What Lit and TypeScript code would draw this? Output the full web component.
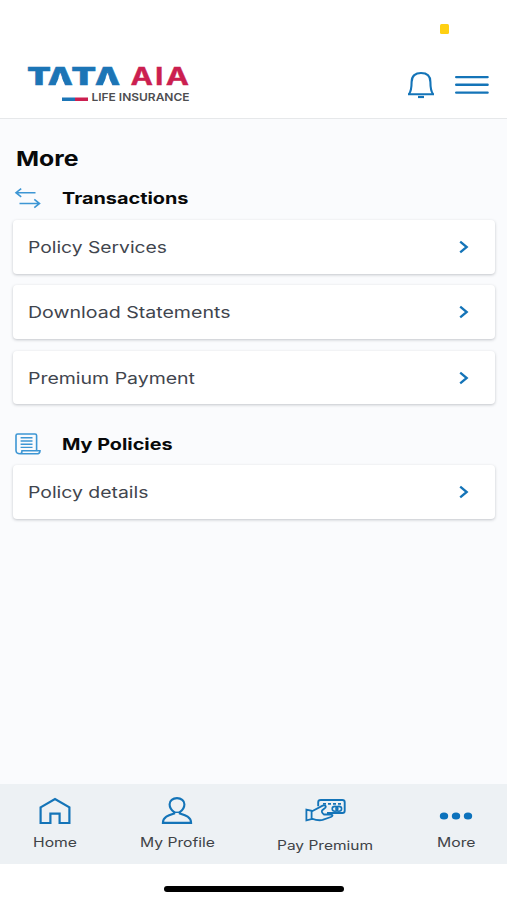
import { LitElement, html, svg, css } from "lit";
import { customElement } from "lit/decorators.js";

// Text set to an exact advance width, for the app's wide lettering.
const label = (text: string, width: number, cls: string, height = 20, base = 15) => html`
  <svg class="label ${cls}" width=${width} height=${height} aria-label=${text}>
    <text x="0" y=${base} textLength=${width} lengthAdjust="spacingAndGlyphs">${text}</text>
  </svg>`;

// One wordmark letter, stretched to the given width.
const letter = (ch: string, x: number, width: number, cls: string) => svg`
  <text class=${cls} x=${x} y="22" textLength=${width} lengthAdjust="spacingAndGlyphs">${ch}</text>`;

const icon = (w: number, h: number, body: unknown, cls = "icon") => html`
  <svg class=${cls} width=${w} height=${h} viewBox="0 0 ${w} ${h}">${body}</svg>`;

const bell = icon(28, 28, svg`
  <path d="M1 23.2H27M2 23C4.2 20 4.6 17.8 4.6 10.9C4.6 4.8 8.6 2 14 2S23.4 4.8 23.4 10.9C23.4 17.8 23.8 20 26 23" stroke-width="2.1"/>
  <path d="M11 26H17" stroke-width="2.2"/>`);
const burger = icon(34, 22, svg`<path d="M1.2 3.1H32.6M1.2 10.8H32.6M1.2 18.6H32.6" stroke-width="2.4" stroke-linecap="round"/>`);
const chevron = icon(12, 14, svg`<path d="M2.2 1.6L8.7 7L2.2 12.4" stroke-width="2.3"/>`);
const arrows = icon(26, 22, svg`
  <path d="M20.5 5.7H1M6.2 1.6L1 5.7L6.2 9.8M4.5 16.5H24.5M19.3 12.4L24.5 16.5L19.3 20.6" stroke-width="1.6"/>`, "icon soft");
const scroll = icon(26, 22, svg`
  <path d="M5 20.8C2.5 20.8 1 19.6 1 17.5V2.6Q1 1 2.7 1H20Q21.6 1 21.6 2.6V17M5 20.8C7 20.8 7 19.3 7 17.7H25C25 19.8 24 20.8 21.5 20.8H5" stroke-width="1.6"/>
  <path d="M5.6 4.8H17.5M5.6 8H17.5M5.6 11.2H17.5M5.6 14.4H17.5" stroke-width="1.4"/>`, "icon soft");
const home = icon(32, 28, svg`
  <path d="M1.6 10.4L16 2L30.4 10.4V26H20.6V16.6H11.4V26H1.6Z" stroke-width="2.2"/>`);
const person = icon(32, 28, svg`
  <path d="M16 1.1C11.8 1.1 8.6 3.7 8.6 7.2C8.6 10.5 10.4 13.2 13.2 15.1V16.4C8.3 18 1.9 19.7 1.9 25.9H30.1C30.1 19.7 23.7 18 18.8 16.4V15.1C21.6 13.2 23.4 10.5 23.4 7.2C23.4 3.7 20.2 1.1 16 1.1Z" stroke-width="2.1"/>
  <path d="M12.8 15.3H19.2" stroke-width="1.4"/>`);
const pay = icon(42, 26, svg`
  <path d="M13.2 8.2V4.2Q13.2 2 15.8 2H37.3Q39.7 2 39.7 4.2V12.7Q39.7 15 37.3 15H22" stroke-width="1.9"/>
  <path d="M1.4 11.6L6.6 12.8V21L1.4 22.3ZM6.6 13.5L17.6 7.7C20 6.9 21.6 8.2 20.4 9.6L17.3 12.2C16.1 13.5 17.3 15.3 19 16.5H26.5C28.3 17.1 27.4 18.5 25.9 19L17.6 21.9Q13.5 23 6.6 20.7" stroke-width="1.8"/>
  <path d="M18 5.8H21M23 5.8H26M28 5.8H31M33 5.8H36" stroke-width="1.7"/>
  <ellipse cx="30" cy="10.8" rx="2.8" ry="2.4" stroke-width="1.6"/><ellipse cx="33.8" cy="10.8" rx="2.8" ry="2.4" stroke-width="1.6"/>`);
const dots = icon(34, 10, svg`
  <g class="fill"><ellipse cx="5" cy="5" rx="4.2" ry="3.6"/><ellipse cx="17" cy="5" rx="4.2" ry="3.6"/><ellipse cx="29" cy="5" rx="4.2" ry="3.6"/></g>`);

const card = (text: string, width: number) => html`
  <div class="card">${label(text, width, "item", 20, 16)}${chevron}</div>`;
const tab = (glyph: unknown, text: string, width: number, cls: string) => html`
  <div class="tab ${cls}"><div class="glyph">${glyph}</div>${label(text, width, "tabtext", 18, 13.3)}</div>`;

@customElement("app-root")
export class AppRoot extends LitElement {
  static styles = css`
    :host { display: flex; flex-direction: column; width: 507px; height: 900px; background: #fff; overflow: hidden; font-family: Inter, "Liberation Sans", sans-serif; }
    svg { display: block; flex: none; overflow: visible; }
    .icon { fill: none; stroke: #1474b8; }
    .soft { stroke: #3d96d4; }
    .fill { fill: #0c72bc; stroke: none; }
    .status { height: 54px; box-sizing: border-box; padding: 24px 58px 0 0; display: flex; justify-content: flex-end; }
    .dot { width: 9px; height: 10px; border-radius: 1.5px; background: #ffd012; }
    .header { height: 65px; box-sizing: border-box; display: flex; align-items: flex-start; padding: 9px 18.5px 0 27px; border-bottom: 1.5px solid #e6e8ea; }
    .tools { display: flex; margin-left: auto; align-items: center; gap: 20px; padding-top: 8px; }
    .tata { font: 900 24.5px Inter, sans-serif; fill: #1c75b6; stroke: #1c75b6; stroke-width: .5px; }
    .aia { font: 700 24.5px Inter, sans-serif; fill: #cb1f50; stroke: #cb1f50; stroke-width: .3px; }
    .life { font: 600 10.5px Inter, sans-serif; fill: #4d4d50; }
    .main { flex: 1; background: #fafbfd; padding: 28px 12.5px 0 13px; display: flex; flex-direction: column; }
    .title { margin-left: 2.5px; font-size: 20.5px; font-weight: 700; fill: #08090a; }
    .section { display: flex; align-items: center; height: 22px; gap: 21px; padding-left: 1.5px; }
    .first { margin: 18px 0 11px; }
    .second { margin: 29px 0 10px; }
    .heading { font-size: 16px; font-weight: 700; fill: #08090a; }
    .cards { display: flex; flex-direction: column; gap: 11.7px; }
    .card { height: 53.7px; box-sizing: border-box; border-radius: 4px; background: #fff; box-shadow: 0 1px 3px rgba(30,40,50,.25); display: flex; align-items: center; justify-content: space-between; padding: 0 25px 0 14.5px; }
    .item { font-size: 16px; font-weight: 400; fill: #41454e; }
    .nav { height: 80px; background: #edf1f4; display: flex; }
    .tab { display: flex; flex-direction: column; align-items: center; }
    .glyph { height: 50px; display: flex; align-items: center; }
    .tabtext { font-size: 12.5px; font-weight: 400; fill: #3f4347; }
    .t1 { width: 109px; } .t2 { width: 136px; } .t3 { width: 160px; } .t4 { width: 102px; }
    .t1 .glyph, .t2 .glyph { padding-top: 4px; height: 46px; }
    .t3 .glyph { padding: 1px 0 0 2px; height: 52px; }
    .t4 .glyph { padding-top: 14px; height: 36px; }
    .bottom { height: 36px; display: flex; justify-content: center; align-items: flex-start; box-sizing: border-box; padding: 22px 0 0 1px; }
    .bar { width: 180px; height: 5.5px; border-radius: 3px; background: #000; }
  `;
  render() {
    return html`
      <div class="status"><div class="dot"></div></div>
      <div class="header">
        <svg width="164" height="42" viewBox="0 0 164 42">
          ${letter("A", 20.8, 25, "tata")}${letter("A", 68, 25, "tata")}
          <path fill="#fff" d="M33.3 10.5L28.6 22.8H38ZM80.5 10.5L75.8 22.8H85.2Z"/>
          ${letter("T", 0.2, 23.5, "tata")}${letter("T", 44.6, 24.5, "tata")}
          ${letter("A", 103.6, 22.5, "aia")}${letter("I", 128, 8.5, "aia")}${letter("A", 138.7, 23.3, "aia")}
          <path fill="#1c75b6" d="M35 34.5H48V38H35Z"/><path fill="#cb1f50" d="M48 34.5H61V38H48Z"/>
          <text class="life" x="64.5" y="38" textLength="98" lengthAdjust="spacingAndGlyphs">LIFE INSURANCE</text>
        </svg>
        <div class="tools">${bell}${burger}</div>
      </div>
      <div class="main">
        ${label("More", 62.5, "title", 22, 18.5)}
        <div class="section first">${arrows}${label("Transactions", 126.5, "heading", 20, 15.8)}</div>
        <div class="cards">
          ${card("Policy Services", 139)}
          ${card("Download Statements", 202.5)}
          ${card("Premium Payment", 167)}
        </div>
        <div class="section second">${scroll}${label("My Policies", 110.5, "heading", 20, 15.8)}</div>
        ${card("Policy details", 120.5)}
      </div>
      <div class="nav">
        ${tab(home, "Home", 44, "t1")}
        ${tab(person, "My Profile", 75, "t2")}
        ${tab(pay, "Pay Premium", 96, "t3")}
        ${tab(dots, "More", 38.5, "t4")}
      </div>
      <div class="bottom"><div class="bar"></div></div>`;
  }
}
